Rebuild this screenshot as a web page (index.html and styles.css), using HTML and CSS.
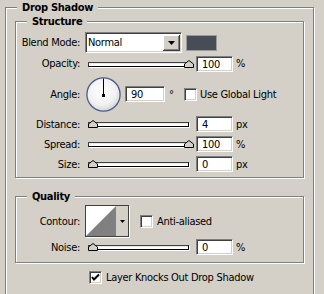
FILE: index.html
```html
<!DOCTYPE html>
<html>
<head>
<meta charset="utf-8">
<link rel="stylesheet" href="styles.css">
</head>
<body>
<div class="group outer">
  <div class="gtitle outer-title">Drop Shadow</div>
  <div class="group structure">
    <div class="gtitle">Structure</div>
    <div class="row blend">
      <span class="lbl">Blend Mode:</span>
      <div class="select">
        <span class="sel-text">Normal</span>
        <span class="sel-btn"><svg width="7" height="4" viewBox="0 0 7 4"><path d="M0 0H7L3.5 4Z" fill="#000"/></svg></span>
      </div>
      <span class="swatch"></span>
    </div>
    <div class="row">
      <span class="lbl">Opacity:</span>
      <div class="slider"><div class="track"></div><svg class="thumb" style="left:96px" width="10" height="8" viewBox="0 0 10 8"><path d="M0.5 7.5V4L5 0.5L9.5 4V7.5Z" fill="#d4d0c8" stroke="#000"/></svg></div>
      <span class="input">100</span><span class="unit">%</span>
    </div>
    <div class="row angle">
      <span class="lbl">Angle:</span>
      <svg class="dial" width="35" height="35" viewBox="0 0 35 35">
        <defs><radialGradient id="dg" cx="0.45" cy="0.4" r="0.6"><stop offset="0" stop-color="#ffffff"/><stop offset="0.7" stop-color="#f1f1f1"/><stop offset="1" stop-color="#d6d6d6"/></radialGradient></defs>
        <circle cx="17.5" cy="17.5" r="16.6" fill="url(#dg)" stroke="#4d5c8a" stroke-width="1.3"/>
        <path d="M17.5 1.5V18" stroke="#000" stroke-width="1"/>
        <rect x="16" y="17" width="3" height="3" fill="#000"/>
      </svg>
      <span class="input angle-input">90</span>
      <span class="deg">°</span>
      <span class="cb"></span>
      <span class="cb-lbl">Use Global Light</span>
    </div>
    <div class="row">
      <span class="lbl">Distance:</span>
      <div class="slider"><div class="track"></div><svg class="thumb" style="left:0px" width="10" height="8" viewBox="0 0 10 8"><path d="M0.5 7.5V4L5 0.5L9.5 4V7.5Z" fill="#d4d0c8" stroke="#000"/></svg></div>
      <span class="input">4</span><span class="unit">px</span>
    </div>
    <div class="row">
      <span class="lbl">Spread:</span>
      <div class="slider"><div class="track"></div><svg class="thumb" style="left:96px" width="10" height="8" viewBox="0 0 10 8"><path d="M0.5 7.5V4L5 0.5L9.5 4V7.5Z" fill="#d4d0c8" stroke="#000"/></svg></div>
      <span class="input">100</span><span class="unit">%</span>
    </div>
    <div class="row">
      <span class="lbl">Size:</span>
      <div class="slider"><div class="track"></div><svg class="thumb" style="left:0px" width="10" height="8" viewBox="0 0 10 8"><path d="M0.5 7.5V4L5 0.5L9.5 4V7.5Z" fill="#d4d0c8" stroke="#000"/></svg></div>
      <span class="input">0</span><span class="unit">px</span>
    </div>
  </div>
  <div class="group quality">
    <div class="gtitle">Quality</div>
    <div class="row contour-row">
      <span class="lbl">Contour:</span>
      <div class="contour">
        <svg class="curve" width="30" height="30" viewBox="0 0 30 30"><rect width="30" height="30" fill="#fff"/><path d="M0 30L30 0V30Z" fill="#808080"/></svg>
        <span class="contour-btn"><svg width="5" height="3" viewBox="0 0 5 3"><path d="M0 0H5L2.5 3Z" fill="#000"/></svg></span>
      </div>
      <span class="cb anti"></span>
      <span class="cb-lbl">Anti-aliased</span>
    </div>
    <div class="row">
      <span class="lbl">Noise:</span>
      <div class="slider"><div class="track"></div><svg class="thumb" style="left:0px" width="10" height="8" viewBox="0 0 10 8"><path d="M0.5 7.5V4L5 0.5L9.5 4V7.5Z" fill="#d4d0c8" stroke="#000"/></svg></div>
      <span class="input">0</span><span class="unit">%</span>
    </div>
  </div>
  <div class="knock">
    <span class="cb checked"><svg width="9" height="9" viewBox="0 0 9 9"><path d="M1 4L3 6.5L8 1.5" fill="none" stroke="#000" stroke-width="2"/></svg></span>
    <span class="cb-lbl">Layer Knocks Out Drop Shadow</span>
  </div>
</div>
</body>
</html>
```
FILE: styles.css
```css
html, body {
  margin: 0;
  padding: 0;
  background: #d4d0c8;
  overflow: hidden;
}
body {
  font-family: "DejaVu Sans Condensed", "DejaVu Sans", "Liberation Sans", sans-serif;
  font-size: 11px;
  letter-spacing: -0.3px;
  color: #000;
  line-height: 13px;
}
.group {
  box-sizing: border-box;
  border: 1px solid #808080;
  box-shadow: inset 1px 1px #fff, 1px 1px #fff;
}
.outer {
  margin: 7px 0 0 5px;
  width: 309px;
  height: 320px;
  padding: 0 9px;
}
.gtitle {
  display: block;
  width: max-content;
  margin-top: -7px;
  margin-left: 11px;
  padding: 0 5px;
  background: #d4d0c8;
  font-weight: bold;
  height: 13px;
}
.outer-title {
  margin-left: 2px;
}
.structure {
  margin-top: 7px;
  width: 289px;
  padding-bottom: 3px;
}
.quality {
  margin-top: 18px;
  width: 289px;
  padding-bottom: 5px;
}
.row {
  display: flex;
  align-items: center;
  height: 20px;
}
.blend {
  margin-top: 4px;
  height: 21px;
}
.blend + .row {
  height: 21px;
}
.lbl {
  flex: none;
  width: 64px;
  text-align: right;
}
.select {
  flex: none;
  display: flex;
  box-sizing: border-box;
  width: 97px;
  height: 21px;
  margin-left: 5px;
  border: 1px solid;
  border-color: #808080 #fff #fff #808080;
  box-shadow: inset 1px 1px #404040, inset -1px -1px #d4d0c8;
  background: #fff;
  padding: 2px 1px 1px 2px;
}
.sel-text {
  flex: 1;
  line-height: 16px;
  padding-left: 0;
}
.sel-btn {
  flex: none;
  width: 17px;
  height: 16px;
  background: #d4d0c8;
  box-shadow: inset -1px -1px #404040, inset 1px 1px #fff, inset -2px -2px #808080;
  display: flex;
  align-items: center;
  justify-content: center;
}
.swatch {
  flex: none;
  width: 31px;
  height: 16px;
  margin-left: 4px;
  box-sizing: border-box;
  border: 1px solid #9a9a9a;
  background: #464d56;
}
.slider {
  flex: none;
  position: relative;
  width: 106px;
  height: 8px;
  margin-left: 8px;
}
.track {
  box-sizing: border-box;
  width: 101px;
  height: 5px;
  margin-top: 2px;
  border: 1px solid #000;
  border-color: #404040 #000 #000 #404040;
  background: #fff;
  box-shadow: 1px 1px #fff, inset 0 1px #e8e8e8;
}
.thumb {
  position: absolute;
  top: 0;
}
.input {
  flex: none;
  box-sizing: border-box;
  width: 37px;
  height: 16px;
  margin-left: 2px;
  border: 1px solid;
  border-color: #808080 #fff #fff #808080;
  box-shadow: inset 1px 1px #404040, inset -1px -1px #d4d0c8;
  background: #fff;
  padding: 1px 0 0 5px;
  line-height: 13px;
}
.unit {
  flex: none;
  margin-left: 3px;
}
.angle {
  height: 40px;
}
.dial {
  flex: none;
  margin-left: 6px;
}
.angle-input {
  width: 40px;
  margin-left: 4px;
}
.deg {
  flex: none;
  width: 15px;
  margin-left: 4px;
}
.cb {
  flex: none;
  box-sizing: border-box;
  width: 13px;
  height: 13px;
  border: 1px solid;
  border-color: #808080 #fff #fff #808080;
  box-shadow: inset 1px 1px #404040, inset -1px -1px #d4d0c8;
  background: #fff;
  display: flex;
  align-items: center;
  justify-content: center;
}
.cb-lbl {
  flex: none;
  margin-left: 3px;
}
.contour-row {
  margin-top: 2px;
  height: 32px;
}
.contour {
  flex: none;
  display: flex;
  box-sizing: border-box;
  width: 44px;
  height: 32px;
  margin-left: 5px;
  border: 1px solid #404040;
  box-shadow: 1px 1px #fff;
  background: #d4d0c8;
}
.curve {
  flex: none;
  display: block;
}
.contour-btn {
  flex: 1;
  display: flex;
  align-items: center;
  justify-content: center;
}
.anti {
  margin-left: 11px;
}
.anti + .cb-lbl {
  margin-left: 4px;
}
.knock {
  display: flex;
  align-items: center;
  height: 13px;
  margin-top: 8px;
  padding-left: 74px;
}
.knock .cb-lbl {
  margin-left: 4px;
}
```
